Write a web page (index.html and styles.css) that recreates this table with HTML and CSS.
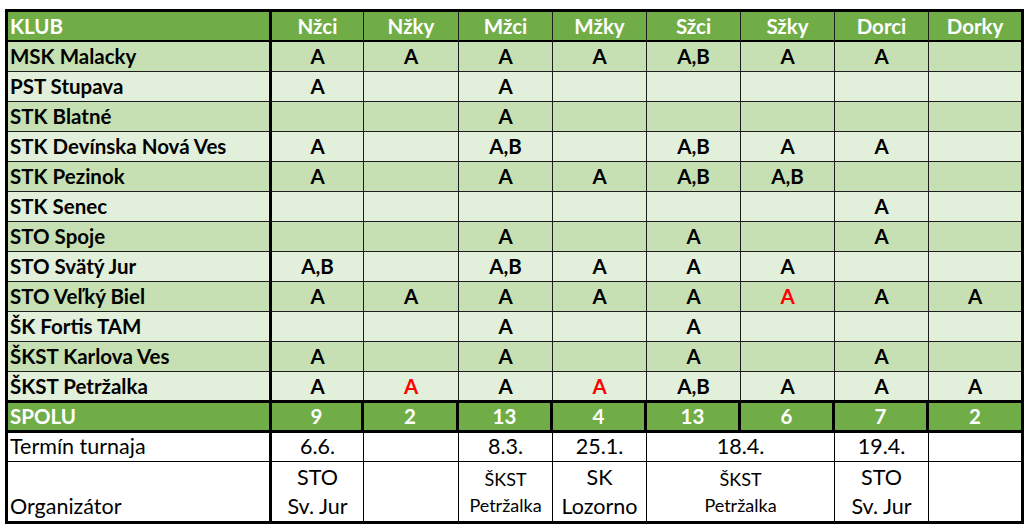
FILE: index.html
```html
<!DOCTYPE html>
<html lang="sk">
<head>
<meta charset="utf-8">
<title>Kluby</title>
<link rel="stylesheet" href="styles.css">
</head>
<body>
<table class="grid">
  <colgroup>
    <col class="c-klub"><col class="c-92"><col class="c-95"><col class="c-94"><col class="c-94"><col class="c-94"><col class="c-94"><col class="c-94"><col class="c-92">
  </colgroup>
  <thead>
    <tr class="head">
      <th class="klub">KLUB</th><th>Nžci</th><th>Nžky</th><th>Mžci</th><th>Mžky</th><th>Sžci</th><th>Sžky</th><th>Dorci</th><th>Dorky</th>
    </tr>
  </thead>
  <tbody>
    <tr class="dark"><td class="klub">MSK Malacky</td><td>A</td><td>A</td><td>A</td><td>A</td><td>A,B</td><td>A</td><td>A</td><td></td></tr>
    <tr class="light"><td class="klub">PST Stupava</td><td>A</td><td></td><td>A</td><td></td><td></td><td></td><td></td><td></td></tr>
    <tr class="dark"><td class="klub">STK Blatné</td><td></td><td></td><td>A</td><td></td><td></td><td></td><td></td><td></td></tr>
    <tr class="light"><td class="klub">STK Devínska Nová Ves</td><td>A</td><td></td><td>A,B</td><td></td><td>A,B</td><td>A</td><td>A</td><td></td></tr>
    <tr class="dark"><td class="klub">STK Pezinok</td><td>A</td><td></td><td>A</td><td>A</td><td>A,B</td><td>A,B</td><td></td><td></td></tr>
    <tr class="light"><td class="klub">STK Senec</td><td></td><td></td><td></td><td></td><td></td><td></td><td>A</td><td></td></tr>
    <tr class="dark"><td class="klub">STO Spoje</td><td></td><td></td><td>A</td><td></td><td>A</td><td></td><td>A</td><td></td></tr>
    <tr class="light"><td class="klub">STO Svätý Jur</td><td>A,B</td><td></td><td>A,B</td><td>A</td><td>A</td><td>A</td><td></td><td></td></tr>
    <tr class="dark"><td class="klub">STO Veľký Biel</td><td>A</td><td>A</td><td>A</td><td>A</td><td>A</td><td class="red">A</td><td>A</td><td>A</td></tr>
    <tr class="light"><td class="klub">ŠK Fortis TAM</td><td></td><td></td><td>A</td><td></td><td>A</td><td></td><td></td><td></td></tr>
    <tr class="dark"><td class="klub">ŠKST Karlova Ves</td><td>A</td><td></td><td>A</td><td></td><td>A</td><td></td><td>A</td><td></td></tr>
    <tr class="light last"><td class="klub">ŠKST Petržalka</td><td>A</td><td class="red">A</td><td>A</td><td class="red">A</td><td>A,B</td><td>A</td><td>A</td><td>A</td></tr>
    <tr class="sum"><td class="klub">SPOLU</td><td>9</td><td>2</td><td>13</td><td>4</td><td>13</td><td>6</td><td>7</td><td>2</td></tr>
    <tr class="date"><td class="klub">Termín turnaja</td><td>6.6.</td><td></td><td>8.3.</td><td>25.1.</td><td colspan="2">18.4.</td><td>19.4.</td><td></td></tr>
    <tr class="org">
      <td class="klub">Organizátor</td>
      <td>STO<br>Sv. Jur</td>
      <td></td>
      <td class="small">ŠKST<br>Petržalka</td>
      <td>SK<br>Lozorno</td>
      <td class="small" colspan="2">ŠKST<br>Petržalka</td>
      <td>STO<br>Sv. Jur</td>
      <td></td>
    </tr>
  </tbody>
</table>
</body>
</html>
```

FILE: styles.css
```css
html, body {
  margin: 0;
  padding: 0;
  background: #ffffff;
}

.grid {
  margin: 9px 0 0 5px;
  border-collapse: separate;
  border-spacing: 0;
  border: 3px solid #000;
  table-layout: fixed;
  width: 1019px;
  font-family: Lato, "Liberation Sans", sans-serif;
  font-size: 20.5px;
  color: #000;
}

.c-klub { width: 264px; }
.c-92 { width: 92px; }
.c-95 { width: 95px; }
.c-94 { width: 94px; }

.grid th,
.grid td {
  box-sizing: border-box;
  padding: 0;
  text-align: center;
  vertical-align: middle;
  border-right: 1px solid #1e1e1e;
  border-bottom: 1px solid #1e1e1e;
  font-weight: 700;
  white-space: nowrap;
  overflow: hidden;
  line-height: 1;
}

.grid th:last-child,
.grid td:last-child {
  border-right: none;
}

.grid .klub {
  text-align: left;
  padding-left: 2px;
  border-right: 3px solid #000;
}

.head { height: 30px; }
.head th {
  background: #70ad47;
  color: #ffffff;
  border-bottom: 2px solid #000;
}

.dark, .light { height: 30px; }
.dark td { background: #c6e0b4; }
.light td { background: #e2efda; }

.last { height: 28px; }
.last td { border-bottom: none; }

.red { color: #ff0000; }

.sum { height: 33px; }
.sum td {
  background: #70ad47;
  color: #ffffff;
  border-top: 3px solid #000;
  border-bottom: 3px solid #000;
  border-right: 3px solid #000;
}

.date { height: 29px; }
.date td {
  background: #ffffff;
  font-weight: 400;
  font-size: 21.5px;
  border-right-color: #000;
  border-bottom-color: #000;
}

.org { height: 59px; }
.org td {
  background: #ffffff;
  font-weight: 400;
  font-size: 21.5px;
  border-bottom: none;
  border-right-color: #000;
  vertical-align: bottom;
  line-height: 29px;
}

.org td.small {
  font-size: 18px;
  line-height: 26px;
  padding-bottom: 3px;
}
```
